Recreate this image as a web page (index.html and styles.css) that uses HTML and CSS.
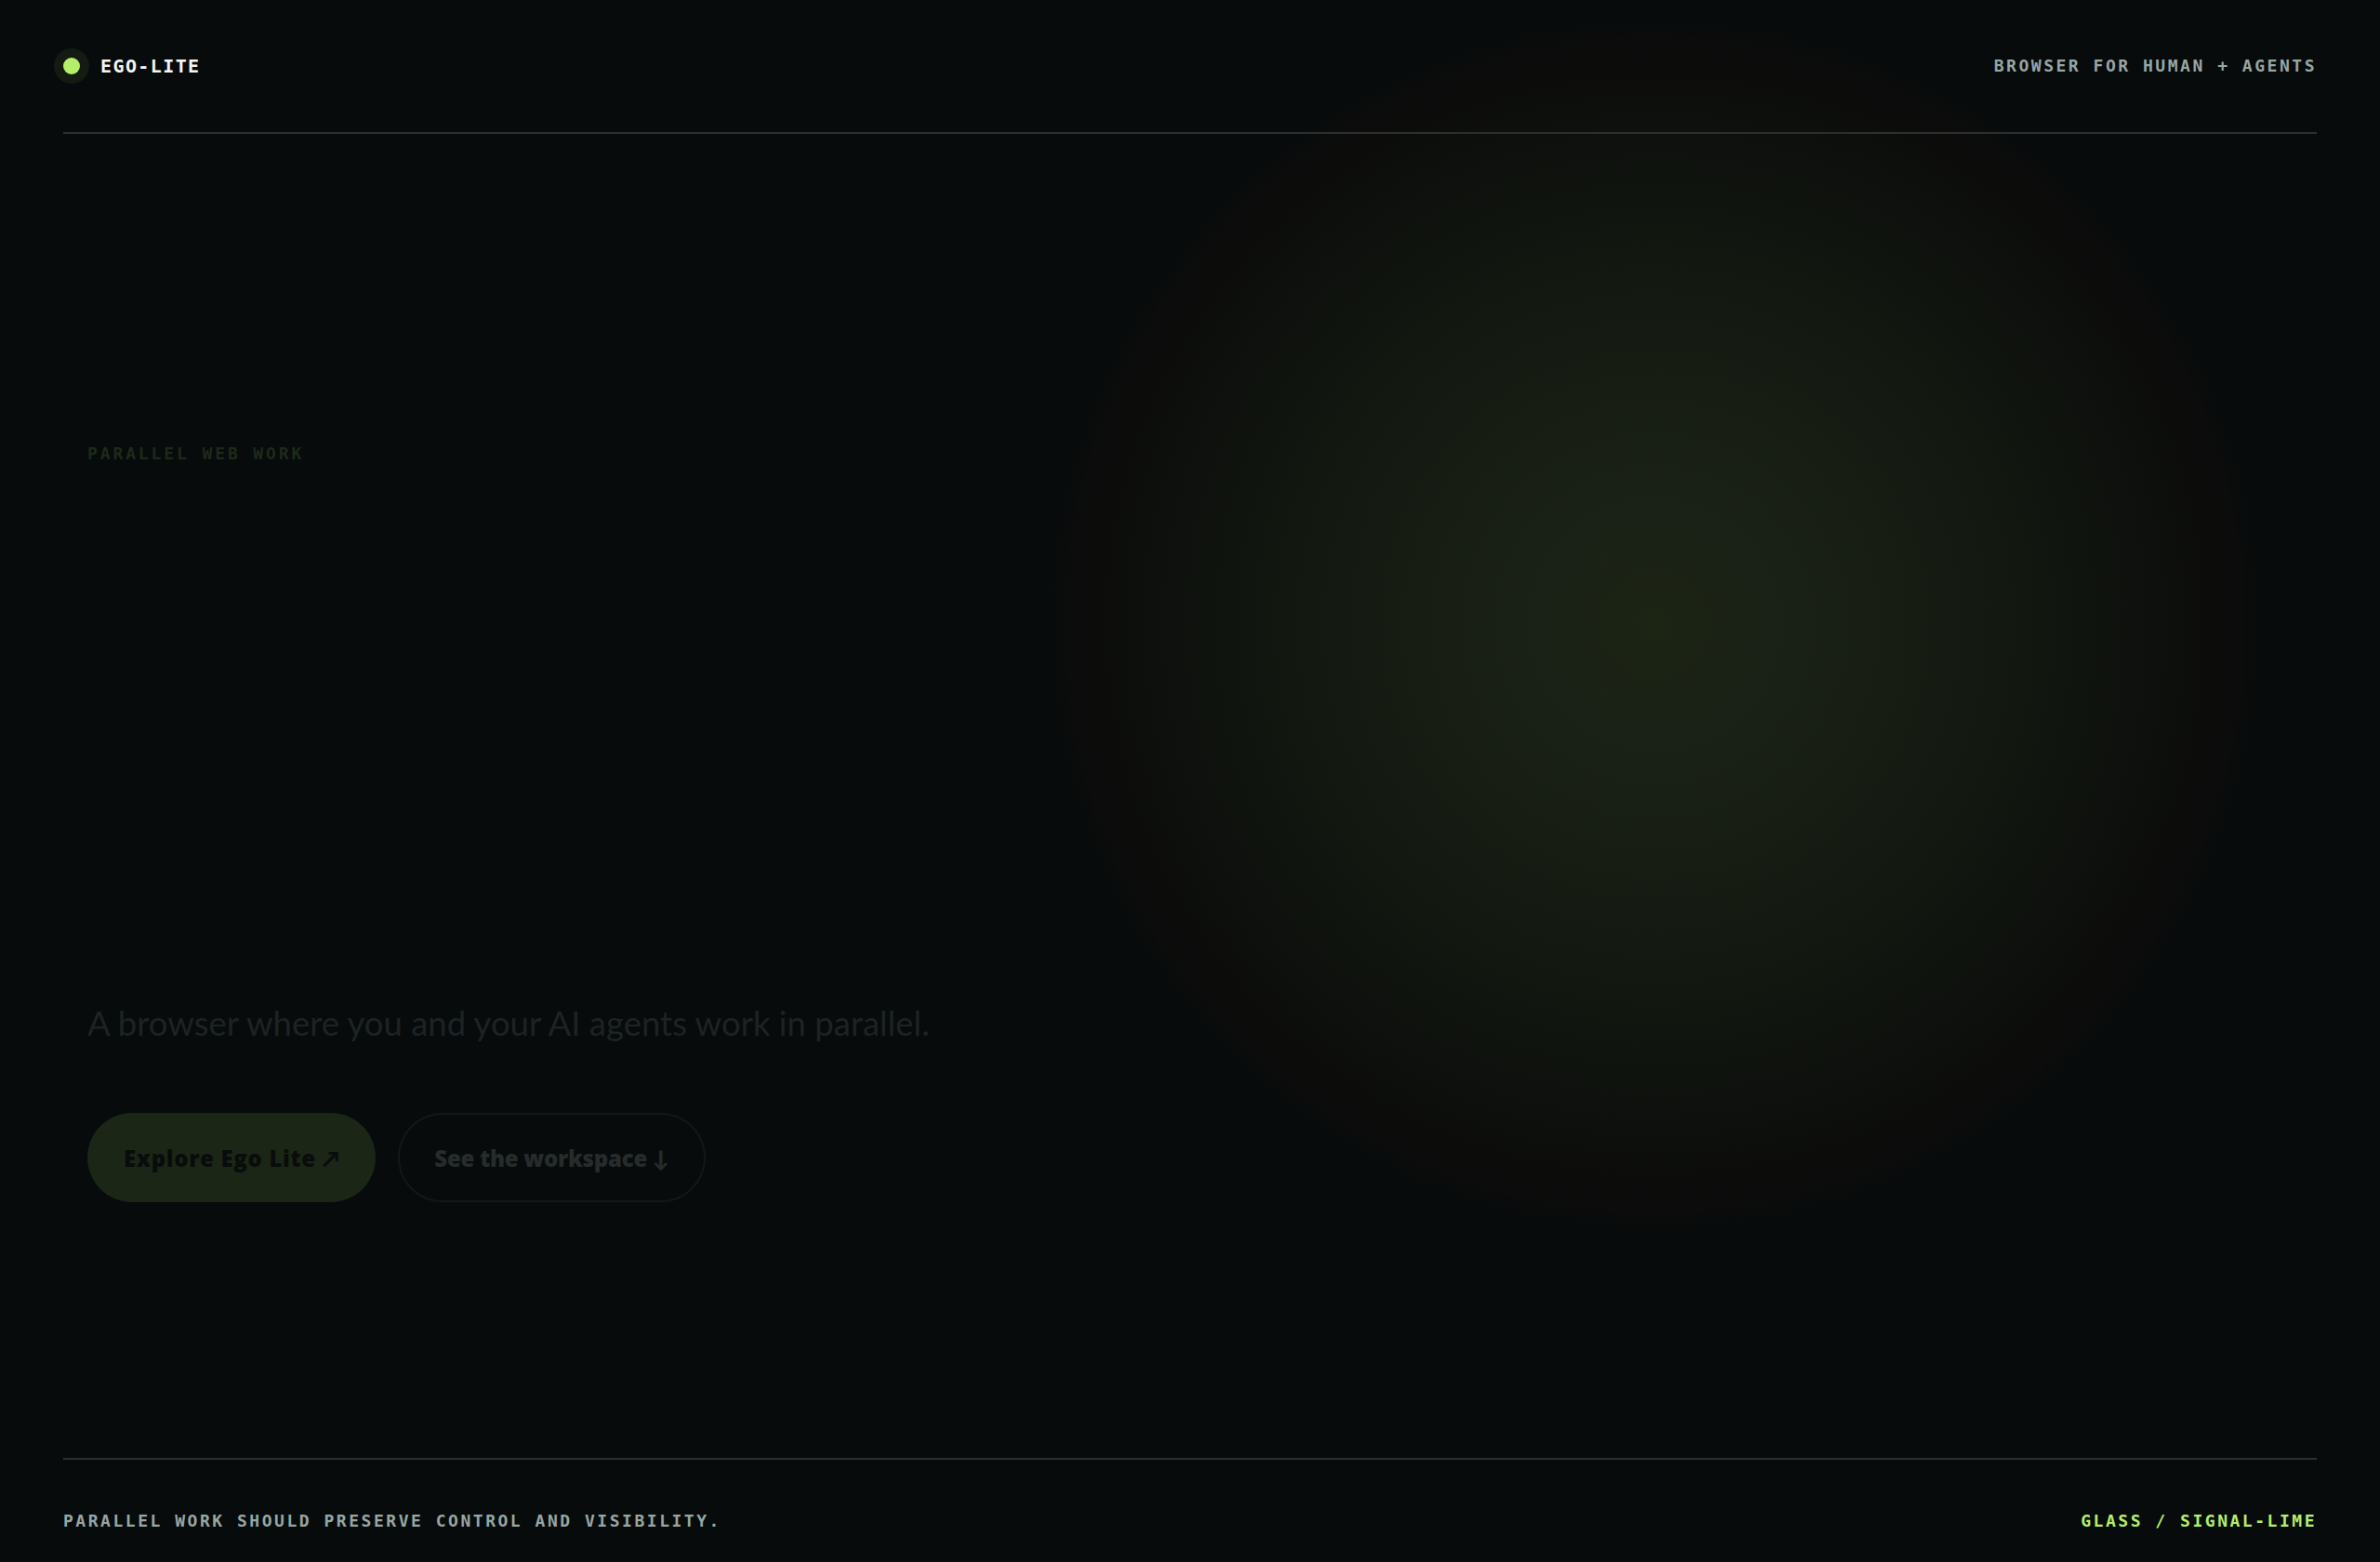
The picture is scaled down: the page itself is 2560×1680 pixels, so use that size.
FILE: index.html
```html
<!DOCTYPE html>
<html lang="en">
<head>
<meta charset="utf-8">
<title>Ego-Lite</title>
<link rel="stylesheet" href="styles.css">
</head>
<body>
<div class="page">
  <header class="topbar">
    <div class="brand">
      <span class="brand-dot"></span>
      <span class="brand-name">EGO-LITE</span>
    </div>
    <div class="topbar-note">BROWSER FOR HUMAN + AGENTS</div>
  </header>
  <main class="hero">
    <p class="eyebrow">PARALLEL WEB WORK</p>
    <p class="tagline">A browser where you and your AI agents work in parallel.</p>
    <div class="actions">
      <a class="btn btn-primary" href="#">Explore Ego Lite ↗</a>
      <a class="btn btn-ghost" href="#">See the workspace ↓</a>
    </div>
  </main>
  <footer class="footbar">
    <div class="foot-note">PARALLEL WORK SHOULD PRESERVE CONTROL AND VISIBILITY.</div>
    <div class="foot-theme">GLASS / SIGNAL-LIME</div>
  </footer>
</div>
</body>
</html>
```
FILE: styles.css
```css
* { box-sizing: border-box; }
html, body { margin: 0; padding: 0; }
body {
  background:
    radial-gradient(circle 660px at 1780px 672px,
      #1c2414 0,
      #1a2116 120px,
      #171d13 260px,
      #121710 400px,
      #0e110d 520px,
      #0c0d0b 600px,
      #0b0c0b 630px,
      rgba(7, 11, 12, 0) 660px),
    #070b0c;
  min-height: 1680px;
  font-family: "DejaVu Sans Mono", monospace;
}
.page {
  height: 1680px;
  padding: 0 68px;
  display: flex;
  flex-direction: column;
}
.topbar {
  height: 144px;
  display: flex;
  align-items: center;
  justify-content: space-between;
  border-bottom: 2px solid #2a2f2f;
}
.brand { display: flex; align-items: center; gap: 22px; }
.brand-dot {
  width: 18px; height: 18px; border-radius: 50%;
  background: #b5ef6a;
  box-shadow: 0 0 0 10px rgba(181, 239, 106, 0.07);
}
.brand-name {
  font-weight: bold; font-size: 20px; letter-spacing: 0.07em;
  color: #f2f5f3; line-height: 22px;
}
.topbar-note, .foot-note, .foot-theme {
  font-weight: bold; font-size: 18px; letter-spacing: 0.14em; line-height: 22px;
  color: #98a6a3;
}
.foot-theme { color: #b5ef6a; }
.hero {
  flex: 1;
  display: flex; flex-direction: column; align-items: flex-start;
  padding: 333px 0 0 26px;
}
.eyebrow {
  margin: 0;
  font-weight: bold; font-size: 18px; letter-spacing: 0.16em; line-height: 22px;
  color: #1e291b;
}
.tagline {
  margin: 578px 0 0 0;
  font-family: "Lato", "Open Sans", sans-serif;
  font-size: 36.5px; line-height: 47px; font-weight: 400;
  color: #1d2323;
}
.actions { margin-top: 73px; display: flex; gap: 24px; }
.btn {
  height: 96px; border-radius: 48px;
  display: inline-flex; align-items: center;
  padding: 0 39px;
  font-family: "Open Sans", "Lato", sans-serif;
  font-weight: 800; font-size: 24px; letter-spacing: -0.01em;
  text-decoration: none;
}
.btn-primary { background: #1c2617; color: #080c0b; letter-spacing: 0.028em; }
.btn-ghost { border: 2px solid #121819; color: #262b2b; padding: 0 37px; }
.footbar {
  height: 112px;
  border-top: 2px solid #2a2f2f;
  display: flex; justify-content: space-between; align-items: flex-start;
  padding-top: 55px;
}
```
